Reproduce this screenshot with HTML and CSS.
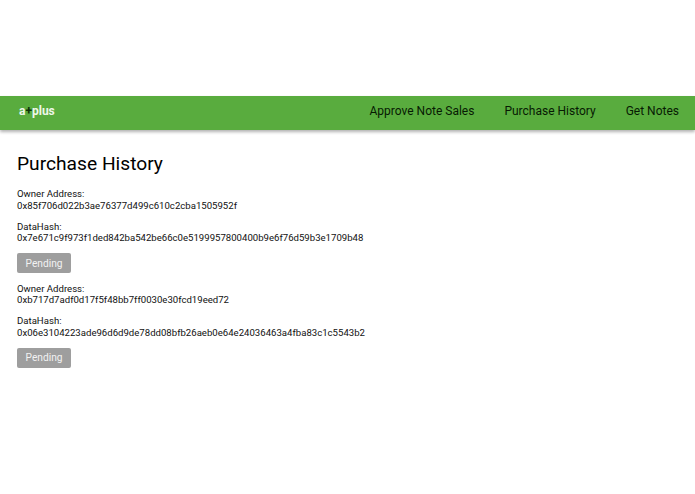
FILE: index.html
```html
<!DOCTYPE html>
<html lang="en">
<head>
<meta charset="utf-8">
<title>Purchase History</title>
<link rel="stylesheet" href="styles.css">
</head>
<body>
<header class="navbar">
  <div class="logo">a<span class="plus">+</span>plus</div>
  <nav class="links">
    <a class="link">Approve Note Sales</a>
    <a class="link">Purchase History</a>
    <a class="link">Get Notes</a>
  </nav>
</header>
<main class="content">
  <h1 class="title">Purchase History</h1>
  <section class="purchase">
    <p class="field">Owner Address:<br>0x85f706d022b3ae76377d499c610c2cba1505952f</p>
    <p class="field">DataHash:<br>0x7e671c9f973f1ded842ba542be66c0e5199957800400b9e6f76d59b3e1709b48</p>
    <button class="status">Pending</button>
  </section>
  <section class="purchase">
    <p class="field">Owner Address:<br>0xb717d7adf0d17f5f48bb7ff0030e30fcd19eed72</p>
    <p class="field">DataHash:<br>0x06e3104223ade96d6d9de78dd08bfb26aeb0e64e24036463a4fba83c1c5543b2</p>
    <button class="status">Pending</button>
  </section>
</main>
</body>
</html>
```
FILE: styles.css
```css
* { box-sizing: border-box; }
html, body { margin: 0; height: 100%; background: #fff; }
body {
  padding-top: 96px;
  font-family: Roboto, "Liberation Sans", sans-serif;
  color: #111;
  overflow: hidden;
}
.navbar {
  height: 34px;
  background: #59ac3e;
  display: flex;
  align-items: center;
  justify-content: space-between;
  padding: 0 16px 4px 19px;
  box-shadow: 0 2px 3px rgba(0,0,0,.3);
}
.logo {
  font-size: 12px;
  font-weight: 700;
  color: #eef7ea;
}
.plus { color: #0f3308; }
.links { display: flex; gap: 30px; }
.link {
  font-size: 12px;
  line-height: 16px;
  color: #071a03;
}
.content { padding: 20px 17px 0; }
.title {
  margin: 0 0 10px;
  font-size: 19.2px;
  line-height: 28px;
  font-weight: 400;
  color: #000;
}
.purchase { margin-bottom: 9.5px; }
.field {
  margin: 0 0 9.5px;
  font-size: 9.6px;
  line-height: 11.5px;
}
.status {
  display: block;
  width: 54px;
  height: 20px;
  padding: 0;
  border: 0;
  border-radius: 2px;
  background: #9e9e9e;
  color: #f2f2f2;
  font: 10.2px Roboto, "Liberation Sans", sans-serif;
}
```
